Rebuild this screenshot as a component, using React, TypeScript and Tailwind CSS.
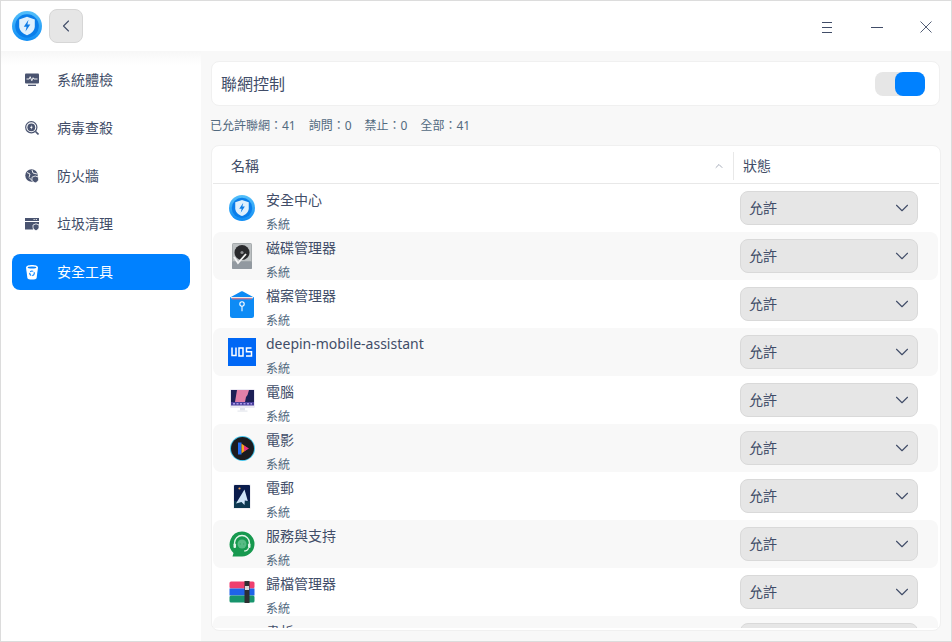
import { ChevronDown, ChevronLeft, ChevronUp } from "lucide-react";

const FONT = "[font-family:'Noto_Sans','Noto_Sans_CJK_TC',sans-serif]";

function ShieldLogo({ size = 30, id }: { size?: number; id: string }) {
  return (
    <svg width={size} height={size} viewBox="0 0 30 30">
      <defs>
        <linearGradient id={id} x1="0" y1="0" x2="0" y2="1">
          <stop offset="0" stopColor="#55c0fa" />
          <stop offset="1" stopColor="#0f8df5" />
        </linearGradient>
      </defs>
      <circle cx="15" cy="15" r="15" fill={`url(#${id})`} />
      <circle cx="15" cy="15" r="11.800" fill="#0a7eea" />
      <path d="M15 5.800l7.800 2.700v6.700c0 4.300-3.300 7.300-7.800 9-4.500-1.700-7.800-4.700-7.800-9V8.500z" fill="#dff0fd" />
      <path d="M16.500 8.800l-4.700 7h2.800l-1.100 4.800 4.800-7.200h-2.900z" fill="#0f7ce6" />
    </svg>
  );
}

function MonitorIcon() {
  return (
    <svg width="14" height="14" viewBox="0 0 14 14">
      <rect x="0" y="0.500" width="14" height="10" rx="1" fill="#4a5470" />
      <rect x="3" y="11.700" width="8" height="1.300" fill="#4a5470" />
      <path d="M1.500 6h2.700l1-2.300 1.600 4 1.300-3 .8 1.300h3.600" fill="none" stroke="#fff" strokeWidth="0.900" />
    </svg>
  );
}

function VirusIcon() {
  return (
    <svg width="14" height="14" viewBox="0 0 14 14">
      <circle cx="6.300" cy="6.300" r="5.600" fill="none" stroke="#4a5470" strokeWidth="1.200" />
      <circle cx="6.300" cy="6.300" r="3.900" fill="#4a5470" />
      <path d="M6.900 3.700L5 6.900h1.300l-.5 2 2-3.200H6.500z" fill="#fff" />
      <path d="M10.500 10.500l3 3" stroke="#4a5470" strokeWidth="1.600" />
    </svg>
  );
}

function FirewallIcon() {
  return (
    <svg width="14" height="14" viewBox="0 0 14 14">
      <circle cx="6.500" cy="6.500" r="6.200" fill="#4a5470" />
      <path d="M2 3.500l3 1.500-1 3.500M7 1l1 3 4 1M4.500 9l3 3" stroke="#fff" strokeWidth="0.900" fill="none" />
      <path d="M7 8.200l3.200-1.200 3.300 1.200v2.300c0 1.600-1.500 2.700-3.300 3.400C8.500 13.200 7 12.100 7 10.500z" fill="#4a5470" stroke="#fff" strokeWidth="0.800" />
    </svg>
  );
}

function TrashIcon() {
  return (
    <svg width="14" height="14" viewBox="0 0 14 14">
      <path d="M0 1h14v3H0z" fill="#4a5470" />
      <path d="M0 5h14v2.500l-5 1-1 4H0z" fill="#4a5470" />
      <path d="M8 8l3-1.200L14 8v2.300c0 1.600-1.300 2.700-3 3.400-1.700-.7-3-1.800-3-3.400z" fill="#4a5470" stroke="#fff" strokeWidth="0.800" />
      <path d="M8.500 2.500h1.300M10.700 2.500H12" stroke="#fff" strokeWidth="0.800" />
    </svg>
  );
}

function ToolsIcon() {
  return (
    <svg width="14" height="16" viewBox="0 0 14 16">
      <path d="M1 3.500C1 1.800 4 1 7 1s6 .8 6 2.500L11.600 14c-.2 1-2.200 1.500-4.600 1.500S2.600 15 2.400 14z" fill="#fff" />
      <ellipse cx="7" cy="3.400" rx="4.300" ry="1" fill="#0081ff" />
      <circle cx="7" cy="9.300" r="2.300" fill="none" stroke="#0081ff" strokeWidth="1.100" strokeDasharray="3 1" />
    </svg>
  );
}

function DiskIcon() {
  return (
    <svg width="20" height="26" viewBox="0 0 20 26">
      <rect x="0" y="0" width="20" height="26" rx="1.500" fill="#a7acae" />
      <rect x="1" y="1" width="18" height="17" fill="#bdc1c3" />
      <circle cx="10" cy="9.500" r="7.500" fill="#2a2a2d" />
      <circle cx="10" cy="9.500" r="1.600" fill="#8d8d90" />
      <rect x="0" y="18.500" width="20" height="7.500" rx="1" fill="#9299a0" />
      <path d="M2 14l4 6 8-9" fill="none" stroke="#f4f4f4" strokeWidth="1.800" />
    </svg>
  );
}

function FolderIcon() {
  return (
    <svg width="24" height="27" viewBox="0 0 24 27">
      <path d="M0 6.500L11 .5c.6-.3 1.400-.3 2 0l11 6v18a2.500 2.500 0 0 1-2.500 2.500h-19A2.500 2.500 0 0 1 0 24.500z" fill="#0d8bf5" />
      <path d="M1 6h22v1.300H1z" fill="#f5e9e4" />
      <path d="M2 7.300h20v1H2z" fill="#f06a76" />
      <circle cx="12" cy="13" r="2.200" fill="none" stroke="#fff" strokeWidth="1.100" />
      <path d="M12 15.200v5" stroke="#fff" strokeWidth="1.100" />
    </svg>
  );
}

function UosIcon() {
  return (
    <div className="flex h-[28px] w-[28px] items-center justify-center bg-[#0067f5]">
      <svg width="22" height="10" viewBox="0 0 22 10">
        <path d="M1 0.500v8h4v-8M8 1h4v8H8zM20.500 1h-5v3.700h5V9h-5.500" fill="none" stroke="#fff" strokeWidth="1.500" />
      </svg>
    </div>
  );
}

function ComputerIcon() {
  return (
    <svg width="25" height="23" viewBox="0 0 25 23">
      <rect x="0" y="0" width="25" height="19" rx="1.500" fill="#eceaf4" />
      <rect x="1" y="1" width="23" height="12" fill="#1c1f56" />
      <path d="M7 1h12l-1.500 5-1.500 2-1 5H5z" fill="#e27fa8" />
      <rect x="1" y="13" width="23" height="3.500" fill="#4b3f9c" />
      <path d="M3 14.700h19" stroke="#a99ae8" strokeWidth="1.400" strokeDasharray="2 1.500" />
      <rect x="10" y="19" width="5" height="2.500" fill="#e2e4ec" />
      <rect x="7.500" y="21.500" width="10" height="1.200" fill="#e6e8ee" />
    </svg>
  );
}

function MovieIcon() {
  return (
    <svg width="25" height="25" viewBox="0 0 25 25">
      <circle cx="12.500" cy="12.500" r="12.500" fill="#45c4ea" />
      <circle cx="12.500" cy="12.500" r="11.500" fill="#1b1b1f" />
      <path d="M8 6.500h3.500v12H8z" fill="#1f6cf2" />
      <path d="M11.500 7.500l6.500 5-6.500 5z" fill="#f6a71c" />
      <path d="M14 9.500l5 3-5 3z" fill="#ea2f80" />
    </svg>
  );
}

function MailIcon() {
  return (
    <svg width="18" height="25" viewBox="0 0 18 25">
      <rect x="0" y="0" width="18" height="25" rx="1.500" fill="#f0f0f4" />
      <rect x="1" y="1" width="16" height="23" rx="1" fill="#0a1c4c" />
      <rect x="1" y="17" width="16" height="7" fill="#0d3850" />
      <path d="M11.500 5.500L3 19.500l5.500-1.500 3 3 .3-4.500 3 .5z" fill="#cfe4f8" />
      <circle cx="6.500" cy="4.500" r="1.100" fill="#f0a65a" />
    </svg>
  );
}

function SupportIcon() {
  return (
    <svg width="26" height="27" viewBox="0 0 26 27">
      <path d="M13 0.500a12.500 12.500 0 0 1 0 25H3.500l1-3.500A12.500 12.500 0 0 1 13 0.500z" fill="#17994f" />
      <path d="M5.500 14v-2a7.500 7.500 0 0 1 15 0v2" fill="none" stroke="#e3f4ea" strokeWidth="1.300" />
      <rect x="4.500" y="12.500" width="2.500" height="4.500" rx="1" fill="#e3f4ea" />
      <rect x="19" y="12.500" width="2.500" height="4.500" rx="1" fill="#e3f4ea" />
      <circle cx="13" cy="13" r="4.500" fill="#57bb84" />
      <path d="M10.800 13h.8M14.400 13h.8" stroke="#17994f" strokeWidth="1" />
      <path d="M19.500 17c-.5 2-2.500 3-4.500 3" fill="none" stroke="#e3f4ea" strokeWidth="1.100" />
    </svg>
  );
}

function ArchiveIcon() {
  return (
    <svg width="26" height="22" viewBox="0 0 26 22">
      <rect x="0.500" y="0.500" width="25" height="7" rx="1.500" fill="#ef3f6e" />
      <rect x="0.500" y="7.500" width="25" height="7" fill="#1f63e8" />
      <rect x="0.500" y="14.500" width="25" height="7" rx="1.500" fill="#17946c" />
      <rect x="15.500" y="0" width="5" height="22" fill="#2e2f33" />
      <rect x="16" y="5" width="4" height="4" fill="#d9d9d9" />
    </svg>
  );
}

function BookIcon() {
  return (
    <svg width="26" height="28" viewBox="0 0 26 28">
      <path d="M2 7c4-3 8-3 11-1 3-2 7-2 11 1v20H2z" fill="#f4f4f4" />
      <circle cx="18" cy="3.500" r="1.300" fill="#555" />
    </svg>
  );
}

const NAV = [
  { label: "系統體檢", icon: <MonitorIcon /> },
  { label: "病毒查殺", icon: <VirusIcon /> },
  { label: "防火牆", icon: <FirewallIcon /> },
  { label: "垃圾清理", icon: <TrashIcon /> },
  { label: "安全工具", icon: <ToolsIcon />, active: true },
];

const APPS = [
  { name: "安全中心", icon: <ShieldLogo size={26} id="logo-row" /> },
  { name: "磁碟管理器", icon: <DiskIcon /> },
  { name: "檔案管理器", icon: <FolderIcon /> },
  { name: "deepin-mobile-assistant", icon: <UosIcon /> },
  { name: "電腦", icon: <ComputerIcon /> },
  { name: "電影", icon: <MovieIcon /> },
  { name: "電郵", icon: <MailIcon /> },
  { name: "服務與支持", icon: <SupportIcon /> },
  { name: "歸檔管理器", icon: <ArchiveIcon /> },
  { name: "書析", icon: <BookIcon /> },
];

export default function App() {
  return (
    <div className={`${FONT} flex h-[642px] w-[952px] flex-col overflow-hidden border border-[#dcdcdc] bg-white text-[#414d68]`}>
      <header className="flex h-[50px] shrink-0 items-center bg-white pl-[11px]">
        <ShieldLogo id="logo-title" />
        <button className="ml-[7px] flex h-[34px] w-[34px] items-center justify-center rounded-lg border border-[#d6d6d6] bg-[#e6e6e6]">
          <ChevronLeft className="size-[20px] text-[#414d68]" strokeWidth={1.3} />
        </button>
        <div className="ml-auto flex items-center pt-[2px]">
          <svg width="12" height="12" viewBox="0 0 12 12" className="mr-[38px]">
            <path d="M1 1.500h10M1 6.500h10M1 11.500h10" stroke="#414d68" strokeWidth="1" />
          </svg>
          <svg width="12" height="12" viewBox="0 0 12 12" className="mr-[37px]">
            <path d="M0 6.500h12" stroke="#414d68" strokeWidth="1" />
          </svg>
          <svg width="12" height="12" viewBox="0 0 12 12" className="mr-[19px]">
            <path d="M0.500 0.500l11 11M11.500 0.500l-11 11" stroke="#414d68" strokeWidth="0.900" />
          </svg>
        </div>
      </header>

      <div className="flex min-h-0 flex-1">
        <nav className="flex w-[200px] shrink-0 flex-col gap-3 bg-[linear-gradient(#f7f7f7,#ffffff_14px)] pl-[11px] pr-[11px] pt-[11px]">
          {NAV.map((item) => (
            <div
              key={item.label}
              className={
                item.active
                  ? "flex h-[36px] items-center rounded-lg bg-[#0081ff] pl-[13px] text-white"
                  : "flex h-[36px] items-center rounded-lg pl-[13px]"
              }
            >
              <span className="flex w-[14px] justify-center">{item.icon}</span>
              <span className="ml-[18px] text-sm">{item.label}</span>
            </div>
          ))}
        </nav>

        <main className="flex min-w-0 flex-1 flex-col bg-[#f8f8f8] pb-[10px] pl-[10px] pr-[10px] pt-[10px]">
          <div className="mr-[1px] flex h-[45px] shrink-0 items-center justify-between rounded-lg border border-[#f0f0f0] bg-white pl-[9px] pr-[14px]">
            <span className="text-base">聯網控制</span>
            <div className="flex h-[24px] w-[50px] justify-end rounded-lg bg-[#e6e6e6]">
              <div className="h-[24px] w-[30px] rounded-lg bg-[#0081ff]" />
            </div>
          </div>

          <div className="-ml-[1px] flex h-[39px] shrink-0 items-center gap-[13px] text-xs text-[#526a7f]">
            <span>已允許聯網：41</span>
            <span>詢問：0</span>
            <span>禁止：0</span>
            <span>全部：41</span>
          </div>

          <section className="flex min-h-0 flex-1 flex-col overflow-hidden rounded-lg border border-[#f0f0f0] bg-white px-[1px] pb-[2px]">
            <div className="flex h-[38px] shrink-0 items-center border-b border-[#e8e8e8] pt-[2px] text-sm">
              <div className="flex flex-1 items-center justify-between pl-[18px] pr-[8px]">
                <span>名稱</span>
                <ChevronUp className="size-[12px] text-[#8a92a3]" strokeWidth={1.5} />
              </div>
              <div className="flex h-[28px] w-[206px] items-center border-l border-[#e8e8e8] pl-[9px]">狀態</div>
            </div>

            <div className="min-h-0 flex-1 overflow-hidden">
              {APPS.map((app, i) => (
                <div
                  key={app.name}
                  className={
                    i % 2 === 1
                      ? "mr-[1px] flex h-[48px] items-center rounded-lg bg-[#f8f8f8]"
                      : "mr-[1px] flex h-[48px] items-center rounded-lg"
                  }
                >
                  <span className="ml-[15px] flex w-[28px] shrink-0 justify-center">{app.icon}</span>
                  <div className="ml-[10px] flex h-full min-w-0 flex-1 flex-col">
                    <span className="mt-[4px] text-sm leading-[24px]">{app.name}</span>
                    <span className="mt-[3px] text-xs leading-[20px] text-[#526a7f]">系統</span>
                  </div>
                  <button className="mr-[20px] flex h-[34px] w-[178px] shrink-0 items-center justify-between rounded-lg border border-[#d9d9d9] bg-[#e6e6e6] pl-[8px] pr-[4px] text-sm">
                    允許
                    <ChevronDown className="size-[22px] text-[#414d68]" strokeWidth={1.2} />
                  </button>
                </div>
              ))}
            </div>
          </section>
        </main>
      </div>
    </div>
  );
}
